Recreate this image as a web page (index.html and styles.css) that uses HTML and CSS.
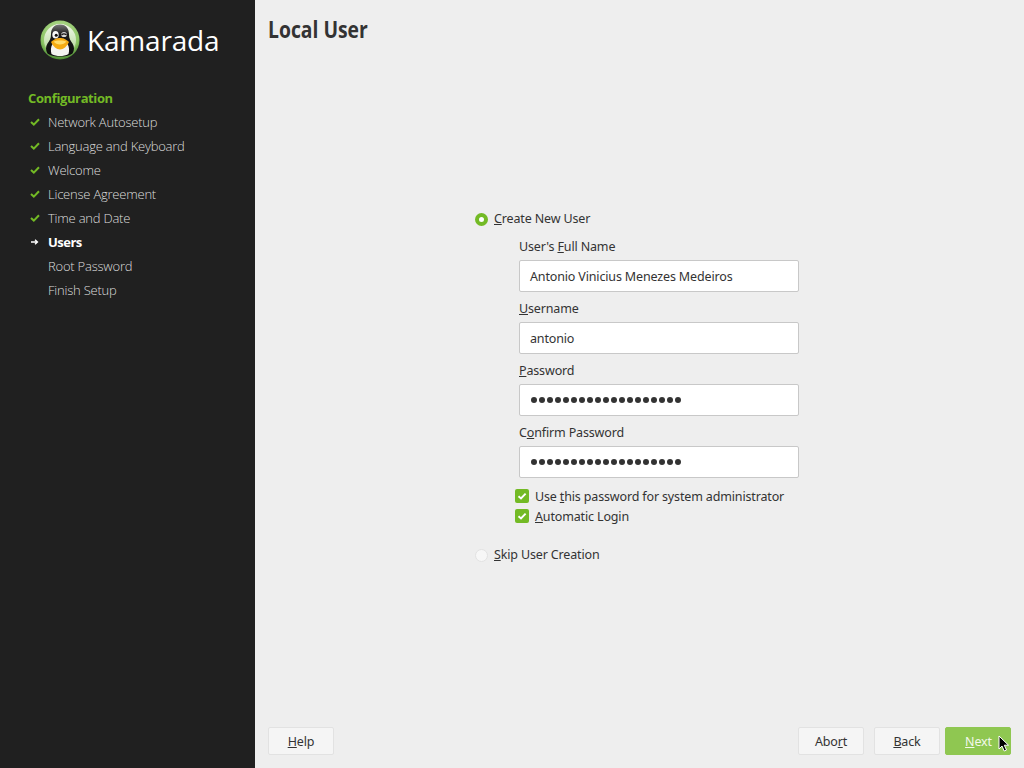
FILE: index.html
```html
<!DOCTYPE html>
<html lang="en">
<head>
<meta charset="utf-8">
<title>Local User</title>
<link rel="stylesheet" href="styles.css">
</head>
<body>
<div class="app">
  <aside class="sidebar">
    <div class="logo">
      <svg class="logo-mark" width="40" height="40" viewBox="0 0 40 40">
        <defs>
          <radialGradient id="ring" cx="50%" cy="35%" r="65%"><stop offset="0" stop-color="#c8e6a8"/><stop offset="0.75" stop-color="#8cc465"/><stop offset="1" stop-color="#4a8a30"/></radialGradient>
          <linearGradient id="bg" x1="0" y1="0" x2="0" y2="1"><stop offset="0" stop-color="#f4f8ee"/><stop offset="1" stop-color="#a9d48a"/></linearGradient>
          <linearGradient id="head" x1="0" y1="0" x2="0" y2="1"><stop offset="0" stop-color="#777"/><stop offset="0.3" stop-color="#1c1c1c"/><stop offset="1" stop-color="#0d0d0d"/></linearGradient>
        </defs>
        <circle cx="20" cy="20" r="19.5" fill="url(#ring)"/>
        <circle cx="20" cy="20" r="16" fill="url(#bg)"/>
        <path d="M20 4.500c-6.500 0-9 4.500-9 10 0 4-1.500 6-3.500 9-2 3-2 7 0 10 3 2.500 8 3 12.500 3s9.500-.5 12.500-3c2-3 2-7 0-10-2-3-3.500-5-3.500-9 0-5.500-2.500-10-9-10z" fill="url(#head)"/>
        <path d="M12.500 24c-1.800 3-2 6.500-1 10 2.500 1.500 5.500 2 8.500 2s6-.5 8.500-2c1-3.500.8-7-1-10-3 2-12 2-15 0z" fill="#f4f4f0"/>
        <ellipse cx="15.500" cy="14.800" rx="3.200" ry="3.800" fill="#f8f8f8"/>
        <ellipse cx="24" cy="14.500" rx="2.800" ry="2.600" fill="#d8d8d8"/>
        <circle cx="16.200" cy="15.200" r="1.500" fill="#111"/>
        <path d="M21.500 15c1.500-1.400 3.500-1.200 5-.2" fill="none" stroke="#111" stroke-width="1.300"/>
        <path d="M11 22c4-3.500 6-4 9-4s5 .5 9 4c-2 4.500-5.500 7.500-9 7.500s-7-3-9-7.500z" fill="#f5ab12"/>
        <path d="M13.500 21.500c3-1.500 10-1.500 13 0-1.500 2-4 3-6.500 3s-5-1-6.500-3z" fill="#ffdc6a"/>
      </svg>
      <span class="logo-text">Kamarada</span>
    </div>
    <nav class="steps">
      <div class="steps-head">Configuration</div>
      <div class="step"><svg class="step-icon" width="10" height="8" viewBox="0 0 10 8"><path d="M1 4l2.800 2.600L9 1.200" fill="none" stroke="#73ba25" stroke-width="2"/></svg>Network Autosetup</div>
      <div class="step"><svg class="step-icon" width="10" height="8" viewBox="0 0 10 8"><path d="M1 4l2.800 2.600L9 1.200" fill="none" stroke="#73ba25" stroke-width="2"/></svg>Language and Keyboard</div>
      <div class="step"><svg class="step-icon" width="10" height="8" viewBox="0 0 10 8"><path d="M1 4l2.800 2.600L9 1.200" fill="none" stroke="#73ba25" stroke-width="2"/></svg>Welcome</div>
      <div class="step"><svg class="step-icon" width="10" height="8" viewBox="0 0 10 8"><path d="M1 4l2.800 2.600L9 1.200" fill="none" stroke="#73ba25" stroke-width="2"/></svg>License Agreement</div>
      <div class="step"><svg class="step-icon" width="10" height="8" viewBox="0 0 10 8"><path d="M1 4l2.800 2.600L9 1.200" fill="none" stroke="#73ba25" stroke-width="2"/></svg>Time and Date</div>
      <div class="step current"><svg class="step-icon" width="10" height="8" viewBox="0 0 10 8"><path d="M1 4h6.500M5 1.800L7.500 4 5 6.200" fill="none" stroke="#fff" stroke-width="1.300"/></svg>Users</div>
      <div class="step"><span class="step-icon"></span>Root Password</div>
      <div class="step"><span class="step-icon"></span>Finish Setup</div>
    </nav>
  </aside>
  <main class="main">
    <h1 class="title">Local User</h1>
    <div class="content">
      <form class="form">
        <div class="radio-row"><span class="radio on"></span><span><u>C</u>reate New User</span></div>
        <div class="fields">
          <label class="field"><span class="field-label">User's <u>F</u>ull Name</span><span class="input">Antonio Vinicius Menezes Medeiros</span></label>
          <label class="field"><span class="field-label"><u>U</u>sername</span><span class="input">antonio</span></label>
          <label class="field"><span class="field-label"><u>P</u>assword</span><span class="input dots"><i></i><i></i><i></i><i></i><i></i><i></i><i></i><i></i><i></i><i></i><i></i><i></i><i></i><i></i><i></i><i></i><i></i><i></i><i></i></span></label>
          <label class="field"><span class="field-label">C<u>o</u>nfirm Password</span><span class="input dots"><i></i><i></i><i></i><i></i><i></i><i></i><i></i><i></i><i></i><i></i><i></i><i></i><i></i><i></i><i></i><i></i><i></i><i></i><i></i></span></label>
        </div>
        <div class="checks">
          <div class="check-row"><svg class="check" width="14" height="14" viewBox="0 0 14 14"><rect width="14" height="14" rx="2" fill="#73ba25"/><path d="M3.500 7.200l2.500 2.300 4.600-4.900" fill="none" stroke="#fff" stroke-width="1.900"/></svg><span>Use <u>t</u>his password for system administrator</span></div>
          <div class="check-row"><svg class="check" width="14" height="14" viewBox="0 0 14 14"><rect width="14" height="14" rx="2" fill="#73ba25"/><path d="M3.500 7.200l2.500 2.300 4.600-4.900" fill="none" stroke="#fff" stroke-width="1.900"/></svg><span><u>A</u>utomatic Login</span></div>
        </div>
        <div class="radio-row skip"><span class="radio"></span><span><u>S</u>kip User Creation</span></div>
      </form>
    </div>
    <footer class="footer">
      <button class="btn" type="button"><u>H</u>elp</button>
      <div class="footer-right">
        <button class="btn" type="button">Abo<u>r</u>t</button>
        <button class="btn" type="button"><u>B</u>ack</button>
        <button class="btn primary" type="button"><u>N</u>ext</button>
      </div>
    </footer>
  </main>
</div>
<svg class="cursor" width="12" height="18" viewBox="0 0 12 18"><path d="M1 1v13l3-3 2.200 5 2.300-1-2.200-4.800H10.500z" fill="#000" stroke="#fff" stroke-width="1"/></svg>
</body>
</html>
```
FILE: styles.css
```css
* { box-sizing: border-box; }
html, body { margin: 0; height: 100%; overflow: hidden; }
body { font-family: "Noto Sans", "Open Sans", sans-serif; color: #333; background: #eee; position: relative; }
.app { display: flex; width: 1024px; height: 768px; }

.sidebar { width: 255px; flex: none; background: #202020; color: #ccc; font-family: "Open Sans", sans-serif; font-size: 13px; }
.logo { display: flex; align-items: flex-start; gap: 7px; padding: 20px 0 0 40px; height: 86px; }
.logo-text { font-family: "Open Sans", sans-serif; font-weight: 400; font-size: 28px; line-height: 40px; color: #fff; letter-spacing: -.2px; }
.steps { padding-left: 28px; }
.steps-head { color: #73ba25; font-weight: 700; line-height: 24px; letter-spacing: -.38px; }
.step { display: flex; align-items: center; height: 24px; font-weight: 300; color: #ddd; letter-spacing: -.22px; }
.step-icon { width: 10px; margin-left: 2px; margin-right: 8px; flex: none; }
.step.current { color: #fff; font-weight: 700; letter-spacing: -.5px; }

.main { flex: 1; display: flex; flex-direction: column; min-width: 0; }
.title { margin: 0; padding: 14px 0 0 13px; font-family: "Open Sans", sans-serif; font-weight: 700; font-size: 23px; line-height: 30px; color: #333; transform: scaleX(.84); transform-origin: 13px 0; }
.content { flex: 1; padding: 166px 0 0 220px; display: flex; align-items: flex-start; }
.form { width: 324px; font-size: 12.5px; letter-spacing: -.15px; }
.radio-row { display: flex; align-items: center; gap: 6px; height: 18px; line-height: 18px; }
.radio { width: 13px; height: 13px; border-radius: 50%; background: #f7f7f7; border: 1px solid #e2e2e2; flex: none; }
.radio.on { background: #fff; border: 4px solid #73ba25; }
.fields { padding: 10px 0 0 44px; display: flex; flex-direction: column; gap: 8px; }
.field { display: flex; flex-direction: column; gap: 4px; }
.field-label { line-height: 18px; height: 18px; }
.input { height: 32px; background: #fff; border: 1px solid #c8c8c8; border-radius: 2px; padding: 0 10px; display: flex; align-items: center; color: #333; }
.dots { gap: 2px; padding-left: 11px; }
.dots i { width: 6px; height: 6px; border-radius: 50%; background: #333; flex: none; }
.checks { padding: 8px 0 0 40px; }
.check-row { display: flex; align-items: center; gap: 6px; height: 20px; white-space: nowrap; }
.check { flex: none; }
.skip { margin-top: 20px; }

.footer { display: flex; justify-content: space-between; padding: 0 13px 13px; }
.footer-right { display: flex; }
.btn { font: inherit; font-size: 12.5px; letter-spacing: -.15px; color: #333; background: #f5f5f5; border: 1px solid #e2e2e2; border-radius: 2px; height: 28px; width: 66px; padding: 0; margin-left: 10px; }
.footer > .btn { margin-left: 0; }
.btn.primary { background: #8fc751; border-color: #8fc751; color: #f2f8ea; margin-left: 5px; padding-left: 1px; }
.cursor { position: absolute; left: 998px; top: 735px; }
```
